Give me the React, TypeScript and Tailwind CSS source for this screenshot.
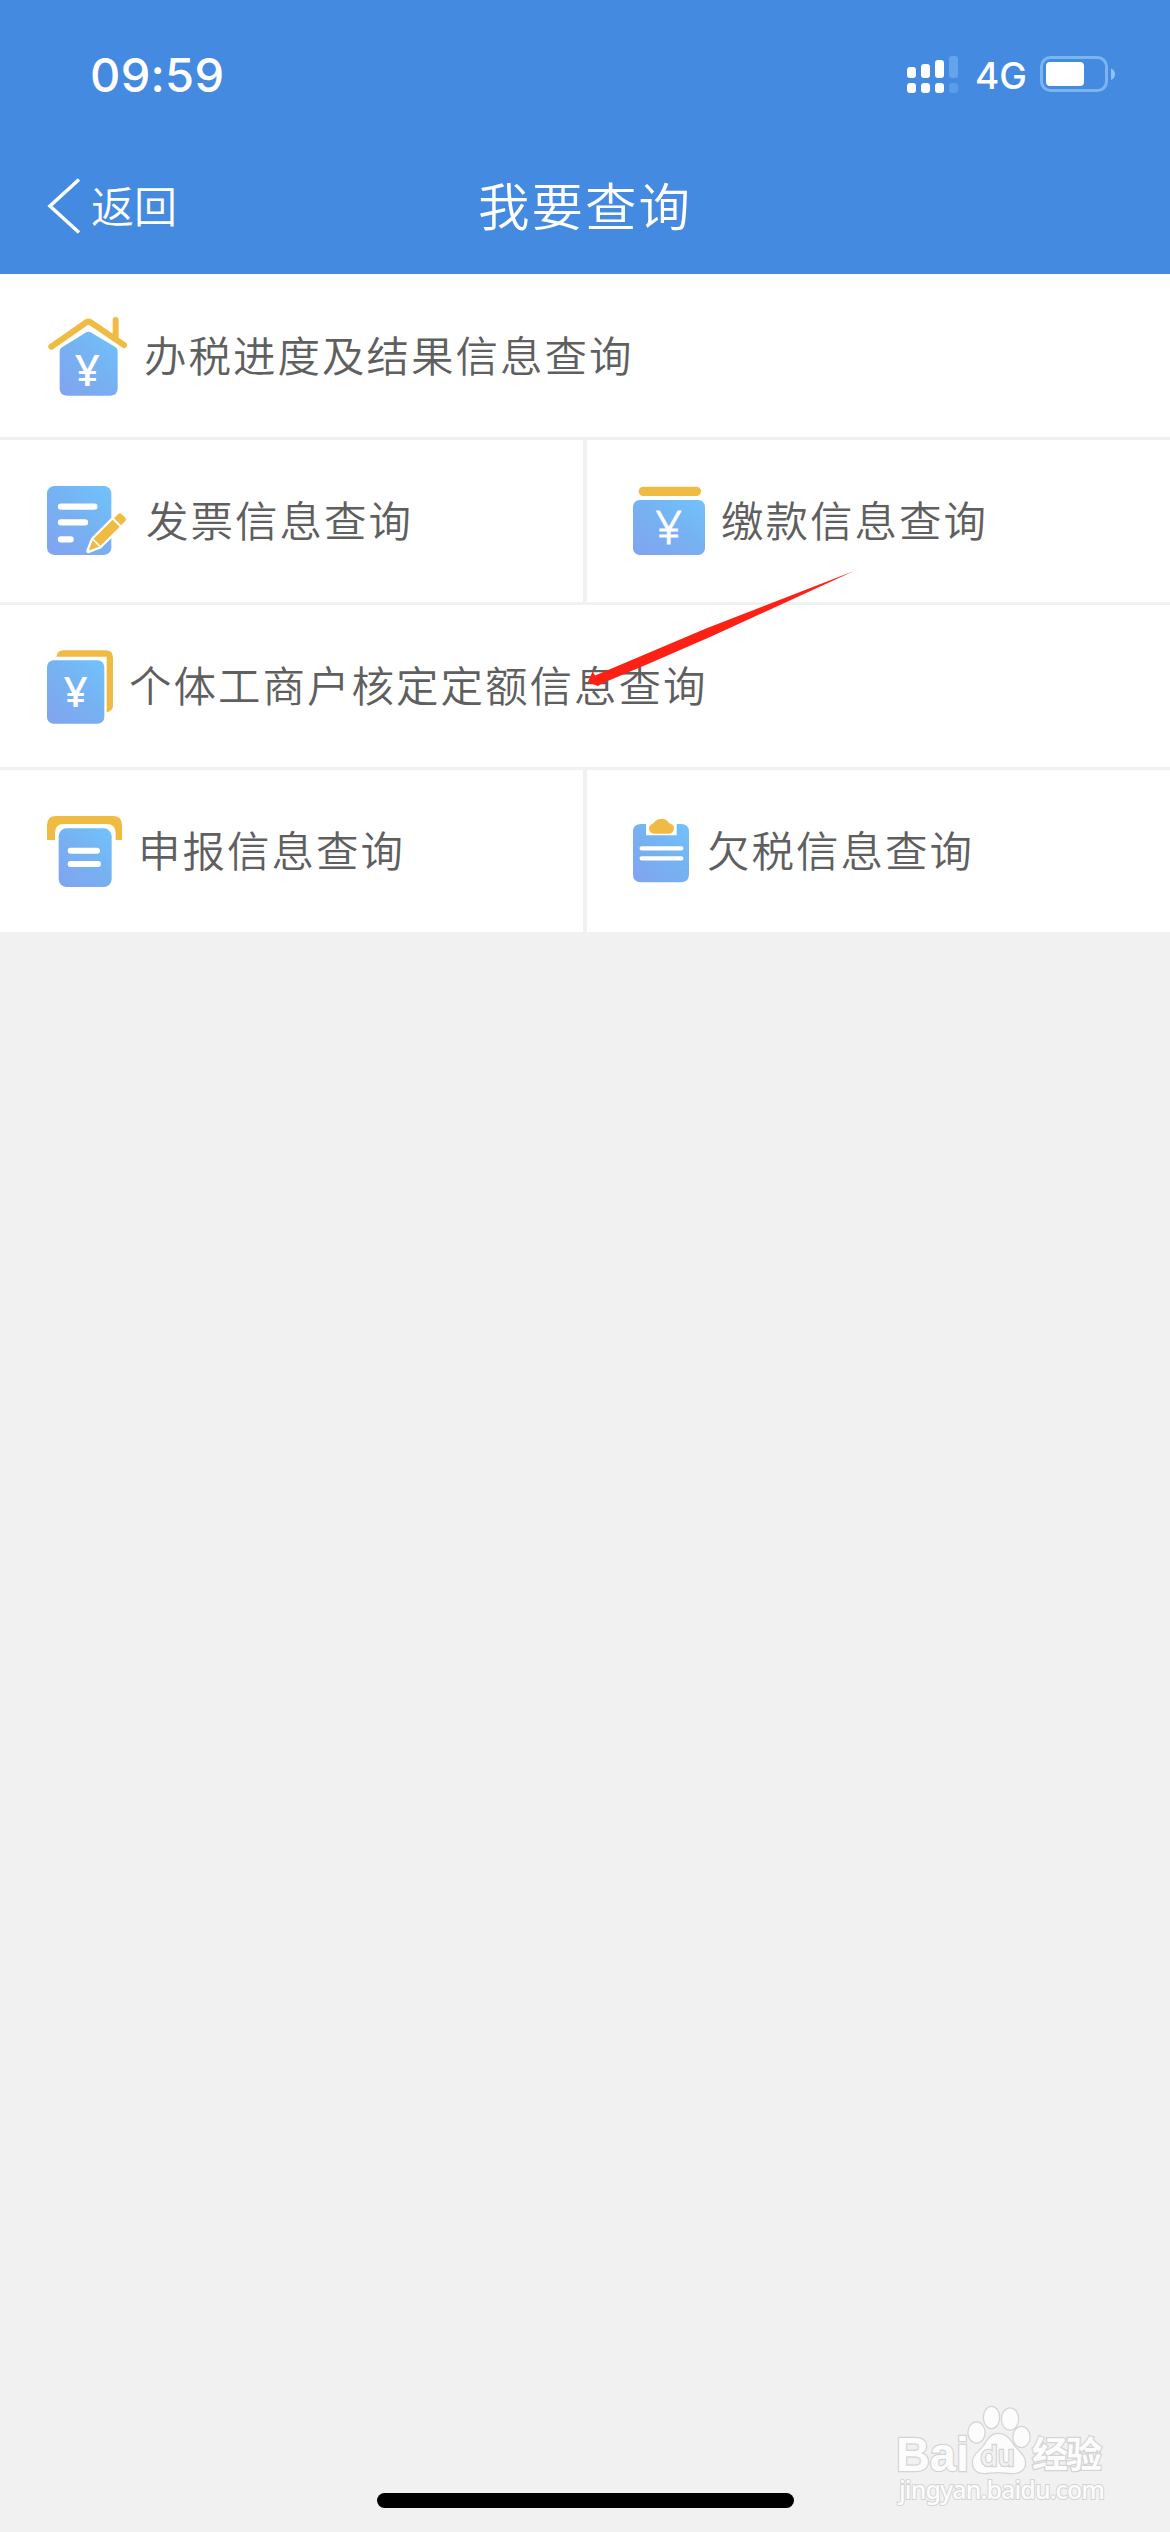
import type { ReactNode } from "react";

const YELLOW = "#f0bb42";

function BlueGradient({ id }: { id: string }) {
  return (
    <defs>
      <linearGradient id={id} x1="1" y1="0" x2="0.15" y2="1">
        <stop offset="0" stopColor="#70c3fb" />
        <stop offset="0.5" stopColor="#76b2f2" />
        <stop offset="1" stopColor="#80a5f0" />
      </linearGradient>
    </defs>
  );
}

function HouseIcon() {
  return (
    <svg className="h-20 w-20 shrink-0" viewBox="0 0 240 240" aria-hidden>
      <BlueGradient id="house" />
      <path
        d="M10 92 L113 20 Q121 14 130 20 L228 87 M203 12 V66"
        fill="none"
        stroke={YELLOW}
        strokeWidth="18"
        strokeLinecap="round"
        strokeLinejoin="round"
      />
      <path
        d="M35 106 Q35 98 42 94 L115 49 Q121 45 128 49 L203 94 Q209 98 209 106 V217 Q209 239 187 239 H57 Q35 239 35 217 Z"
        fill="url(#house)"
      />
      <text x="119" y="211" fontSize="132" fontWeight="500" textAnchor="middle" fill="#fff" fontFamily="Noto Sans, sans-serif">
        ¥
      </text>
    </svg>
  );
}

function InvoiceIcon() {
  return (
    <svg className="h-20 w-20 shrink-0" viewBox="0 0 240 240" aria-hidden>
      <BlueGradient id="invoice" />
      <rect y="15" width="193" height="207" rx="22" fill="url(#invoice)" />
      <path d="M42 77 H142 M42 124 H114 M42 175 H71" stroke="#fff" strokeWidth="19" strokeLinecap="round" />
      <g transform="translate(124 210) rotate(-45)" strokeLinejoin="round">
        <path d="M0 0 L34 -15 H140 Q147 -15 147 -8 V8 Q147 15 140 15 H34 Z" fill="#fff" stroke="#fff" strokeWidth="13" />
        <path d="M2 0 L32 -14 V14 Z M37 -15 H118 V15 H37 Z" fill={YELLOW} />
        <path d="M124 -15 H140 Q149 -15 149 -7 V7 Q149 15 140 15 H124 Z" fill={YELLOW} />
      </g>
    </svg>
  );
}

function PaymentIcon() {
  return (
    <svg className="h-[70px] w-[72px] shrink-0" viewBox="0 0 216 210" aria-hidden>
      <BlueGradient id="payment" />
      <rect x="17" y="2" width="187" height="28" rx="14" fill={YELLOW} />
      <rect y="42" width="216" height="165" rx="20" fill="url(#payment)" />
      <text
        x="108"
        y="174"
        fontSize="138"
        textAnchor="middle"
        fill="#fff"
        stroke="#fff"
        strokeWidth="3"
        strokeLinejoin="round"
        fontFamily="Noto Sans, sans-serif"
      >
        ¥
      </text>
    </svg>
  );
}

function QuotaIcon() {
  return (
    <svg className="h-[75px] w-[66px] shrink-0" viewBox="0 0 198 225" aria-hidden>
      <BlueGradient id="quota" />
      <path d="M28 23 Q31 4 50 4 H176 Q198 4 198 26 V170 Q198 186 179 190 V23 Z" fill={YELLOW} />
      <rect y="34" width="172" height="190" rx="20" fill="url(#quota)" />
      <text x="87" y="174" fontSize="127" fontWeight="500" textAnchor="middle" fill="#fff" fontFamily="Noto Sans, sans-serif">
        ¥
      </text>
    </svg>
  );
}

function DeclareIcon() {
  return (
    <svg className="h-[72px] w-[75px] shrink-0" viewBox="0 0 225 216" aria-hidden>
      <BlueGradient id="declare" />
      <path d="M0 75 V31 Q0 3 28 3 H197 Q225 3 225 31 V75 H206 V55 Q206 27 178 27 H50 Q24 27 24 55 V75 Z" fill={YELLOW} />
      <rect x="35" y="40" width="159" height="176" rx="24" fill="url(#declare)" />
      <path d="M71 107 H150 M71 147 H153" stroke="#fff" strokeWidth="18" strokeLinecap="round" />
    </svg>
  );
}

function ArrearsIcon() {
  return (
    <svg className="h-[66px] w-14 shrink-0" viewBox="0 0 168 198" aria-hidden>
      <BlueGradient id="arrears" />
      <path
        d="M24 18 H39 V52 H131 V18 H144 Q168 18 168 42 V169 Q168 193 144 193 H24 Q0 193 0 169 V42 Q0 18 24 18 Z"
        fill="url(#arrears)"
      />
      <path
        d="M66 10 Q74 2 86 3 Q98 2 104 10 Q107 16 114 18 Q123 22 123 32 Q121 47 106 47 H64 Q50 47 48 33 Q48 21 58 18 Q63 16 66 10 Z"
        fill={YELLOW}
      />
      <path d="M26 91 H145 M26 121 H145" stroke="#fff" strokeWidth="13" strokeLinecap="round" />
    </svg>
  );
}

function StatusBar() {
  return (
    <div className="flex h-[148px] items-center justify-between pr-[54px] pl-[90px]">
      <span className="font-[Inter,sans-serif] text-[47px] leading-none font-medium tracking-[0.3px]">09:59</span>
      <div className="flex items-center">
        <svg className="mt-0.5 h-[38px] w-[52px]" viewBox="0 0 52 38" fill="#fff" aria-hidden>
          <rect y="11" width="9" height="11" rx="3" />
          <rect x="14" y="8" width="9" height="14" rx="3" />
          <rect x="28" y="4" width="9" height="18" rx="3" />
          <rect x="42" width="9" height="22" rx="3" fill="#64a4ed" />
          <rect y="27" width="9" height="10" rx="3" />
          <rect x="14" y="27" width="9" height="10" rx="3" />
          <rect x="28" y="27" width="9" height="10" rx="3" />
          <rect x="42" y="27" width="9" height="10" rx="3" fill="#5a9bea" />
        </svg>
        <span className="mt-0.5 ml-4 w-[65px] font-[Inter,sans-serif] text-[37px] leading-none font-[450]">4G</span>
        <svg className="h-9 w-[76px]" viewBox="0 0 76 36" aria-hidden>
          <rect x="1.5" y="1.5" width="65" height="33" rx="9" fill="none" stroke="#7bb5f0" strokeWidth="3" />
          <path d="M71 12.5 Q75 14.500 75 18 Q75 22 71 24 Z" fill="#8fc3f4" />
          <rect x="6" y="6" width="38" height="24" rx="4" fill="#fff" />
        </svg>
      </div>
    </div>
  );
}

function NavBar() {
  return (
    <div className="grid h-[112px] grid-cols-3 items-center font-[350]">
      <div className="flex items-center pl-[46px]">
        <svg className="mt-1 h-[60px] w-9" viewBox="0 0 36 60" aria-hidden>
          <path d="M33 3.500 L4 30 L33 56.500" fill="none" stroke="#fff" strokeWidth="3.500" />
        </svg>
        <span className="ml-[9px] text-[43px] leading-normal">返回</span>
      </div>
      <h1 className="text-center text-[51.5px] leading-normal tracking-[2px]">我要查询</h1>
    </div>
  );
}

type CellProps = { icon: ReactNode; label: string; className: string };

function Cell({ icon, label, className }: CellProps) {
  return (
    <div className={`flex items-center bg-white whitespace-nowrap ${className}`}>
      {icon}
      <span className="pb-1">{label}</span>
    </div>
  );
}

function Watermark() {
  return (
    <svg
      className="absolute top-[2400px] left-[890px] h-[110px] w-[230px]"
      viewBox="0 0 230 110"
      fill="#fcfcfc"
      stroke="#d4d4d4"
      strokeWidth="2.500"
      paintOrder="stroke"
      aria-hidden
    >
      <text x="6" y="71" fontSize="48" fontWeight="700" textLength="73" lengthAdjust="spacingAndGlyphs" fontFamily="Liberation Sans, sans-serif">
        Bai
      </text>
      <ellipse cx="86.500" cy="32.500" rx="8" ry="10" />
      <ellipse cx="101.500" cy="17.500" rx="7.500" ry="10.500" />
      <ellipse cx="120" cy="19" rx="8" ry="10.500" />
      <ellipse cx="131.500" cy="37" rx="8" ry="10" />
      <path d="M108 34 C116 34 120 40 124 46 C129 52 135 56 135 63 C135 70 129 73 122 73 C117 73 113 72 108 72 C103 72 99 73 94 73 C87 73 83 69 83 62 C83 55 90 51 94 46 C98 40 101 34 108 34 Z" />
      <text x="90.500" y="66" fontSize="28" fontWeight="500" fill="#f1f1f1" textLength="34" lengthAdjust="spacingAndGlyphs" fontFamily="Inter, sans-serif">
        du
      </text>
      <text x="142" y="68" fontSize="36" fontWeight="700" textLength="70" fontFamily="Noto Sans CJK SC, sans-serif">
        经验
      </text>
      <text x="9" y="99" fontSize="25" fontWeight="500" strokeWidth="2" textLength="206" fontFamily="Noto Sans, sans-serif">
        jingyan.baidu.com
      </text>
    </svg>
  );
}

export default function App() {
  return (
    <div className="relative flex h-[2532px] w-[1170px] flex-col overflow-hidden bg-[#f1f1f1] font-['Noto_Sans_CJK_SC',sans-serif]">
      <header className="h-[274px] shrink-0 bg-[#438ae0] text-white">
        <StatusBar />
        <NavBar />
      </header>

      <main className="flex flex-col gap-[3px] text-[42.5px] leading-normal font-[350] tracking-[2px] text-[#5f5f5f]">
        <Cell icon={<HouseIcon />} label="办税进度及结果信息查询" className="h-[163px] gap-4 pl-12" />
        <div className="grid h-[162px] grid-cols-[583px_583px] gap-1">
          <Cell icon={<InvoiceIcon />} label="发票信息查询" className="gap-[19px] pl-[47px]" />
          <Cell icon={<PaymentIcon />} label="缴款信息查询" className="gap-4 pl-[46px]" />
        </div>
        <Cell icon={<QuotaIcon />} label="个体工商户核定定额信息查询" className="h-[162px] gap-4 pl-[47px]" />
        <div className="grid h-[162px] grid-cols-[583px_583px] gap-1">
          <Cell icon={<DeclareIcon />} label="申报信息查询" className="gap-4 pl-[47px]" />
          <Cell icon={<ArrearsIcon />} label="欠税信息查询" className="gap-[18px] pl-[46px]" />
        </div>
      </main>

      {/* red pointer over the quota row */}
      <svg className="absolute top-[570px] left-[586px] h-[120px] w-[270px]" viewBox="0 0 270 120" aria-hidden>
        <path d="M1.700 112.300 L6.700 101.300 L9 105.500 L54 86.500 L120 58.500 L268 1 L124 67 L62 94 L17 113 L12 116 Z" fill="#fd2115" />
      </svg>

      <Watermark />
      <div className="mx-auto mt-auto mb-6 h-[15px] w-[417px] shrink-0 rounded-full bg-black" />
    </div>
  );
}
